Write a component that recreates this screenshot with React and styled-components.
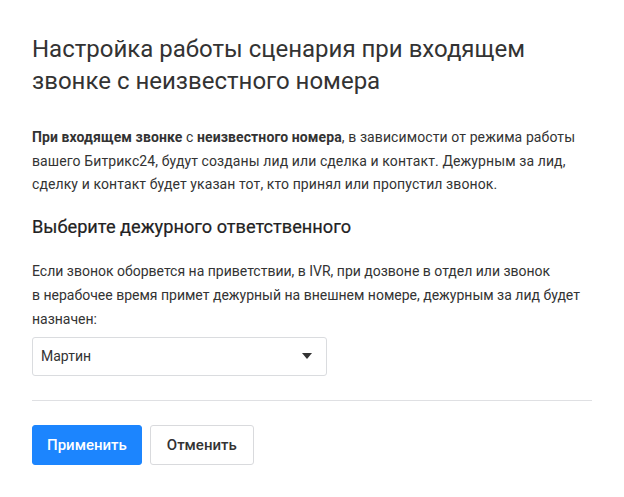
import React, {useState} from 'react';
import styled, {createGlobalStyle} from 'styled-components';

const GlobalStyle = createGlobalStyle`
  body {
    margin: 0;
    background: #fff;
    font-family: Roboto, "Liberation Sans", Arial, sans-serif;
    color: #333;
  }
`

const Page = styled.div`
  width: 624px;
  box-sizing: border-box;
  padding: 33px 32px 32px 32px;
`

const Title = styled.h1`
  margin: 0 0 29px;
  font-size: 24px;
  font-weight: 400;
  line-height: 32px;
  color: #333;
`

const Text = styled.p`
  margin: 0;
  font-size: 14px;
  line-height: ${p => p.$lh || '23.5px'};
  letter-spacing: ${p => p.$ls || '0'};
  color: #333;

  b {
    font-weight: 700;
  }
`

const Subtitle = styled.h2`
  margin: 18px 0 20px;
  font-size: 18.2px;
  font-weight: 400;
  line-height: 24px;
  color: #222;
  -webkit-text-stroke: 0.2px #222;
`

const SelectBox = styled.div`
  display: flex;
  align-items: center;
  justify-content: space-between;
  width: 295px;
  height: 39px;
  margin-top: 6px;
  box-sizing: border-box;
  padding: 0 14px 0 8px;
  border: 1px solid #dadcdf;
  border-radius: 3px;
  font-size: 14px;
  color: #333;
  cursor: pointer;
`

const Arrow = styled.span`
  width: 0;
  height: 0;
  border-left: 5px solid transparent;
  border-right: 5px solid transparent;
  border-top: 6px solid #333;
`

const Divider = styled.hr`
  margin: 24px 0 24px;
  border: 0;
  border-top: 1px solid #dfe0e3;
`

const Buttons = styled.div`
  display: flex;
  gap: 8px;
`

const Button = styled.button`
  height: 40px;
  box-sizing: border-box;
  padding: 0 ${p => p.$primary ? '14px' : '16px'};
  border-radius: 3px;
  border: 1px solid ${p => p.$primary ? '#1c85fe' : '#d9dadd'};
  background: ${p => p.$primary ? '#1c85fe' : '#fff'};
  color: ${p => p.$primary ? '#fff' : '#333'};
  font-family: Roboto, "Liberation Sans", Arial, sans-serif;
  font-size: 15px;
  font-weight: 500;
  cursor: pointer;
`

const App = () => {
    const [user] = useState('Мартин');

    return (
        <Page>
            <GlobalStyle/>
            <Title>Настройка работы сценария при входящем звонке с неизвестного номера</Title>
            <Text $ls="0.1px">
                <b>При входящем звонке</b> с <b>неизвестного номера</b>, в зависимости от режима работы
                вашего Битрикс24, будут созданы лид или сделка и контакт. Дежурным за лид,
                сделку и контакт будет указан тот, кто принял или пропустил звонок.
            </Text>
            <Subtitle>Выберите дежурного ответственного</Subtitle>
            <Text $lh="24px">
                Если звонок оборвется на приветствии, в IVR, при дозвоне в отдел или звонок
                в{'\u00a0'}нерабочее время примет дежурный на внешнем номере, дежурным за лид будет
                назначен:
            </Text>
            <SelectBox>
                <span>{user}</span>
                <Arrow/>
            </SelectBox>
            <Divider/>
            <Buttons>
                <Button $primary>Применить</Button>
                <Button>Отменить</Button>
            </Buttons>
        </Page>
    );
};

export default App;
